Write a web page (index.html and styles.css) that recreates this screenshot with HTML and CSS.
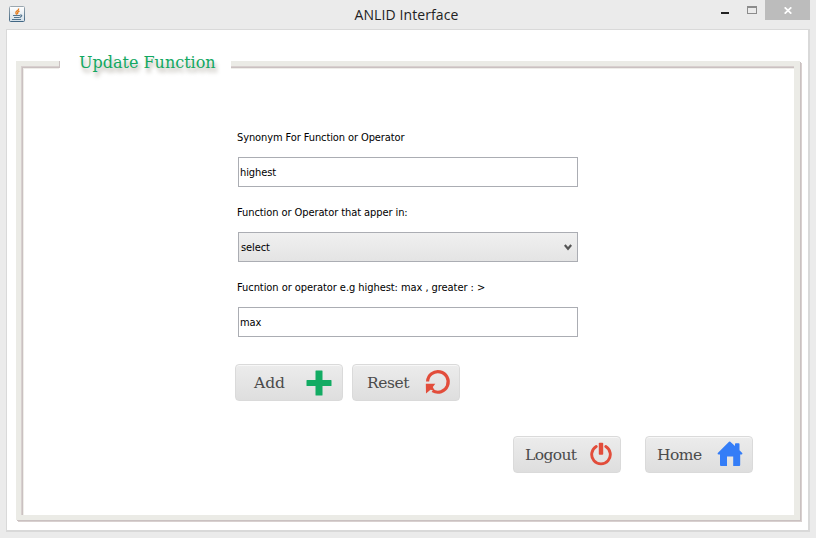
FILE: index.html
```html
<!DOCTYPE html>
<html lang="en">
<head>
<meta charset="utf-8">
<title>ANLID Interface</title>
<link rel="stylesheet" href="styles.css">
</head>
<body>
<div class="window">
  <header class="titlebar">
    <svg class="app-icon" width="16" height="16" viewBox="0 0 16 16"><defs><linearGradient id="java" x2="0" y2="1"><stop stop-color="#fff"/><stop offset="1" stop-color="#d3dfe8"/></linearGradient><linearGradient id="edge" x2="0" y2="1"><stop stop-color="#9aa7b0"/><stop offset="1" stop-color="#426784"/></linearGradient></defs><rect x=".5" y=".5" width="15" height="15" rx="1" fill="url(#java)" stroke="url(#edge)"/><path d="M9.500 2.500Q10 4 7.800 5Q6 6.500 7.800 8.500M10.500 5Q7.500 6.500 9 8" fill="none" stroke="#e57b1b" stroke-width="1.300"/><path d="M4 9.500h7M5 11.500h5.500M3 13.500h9M11 9q2.500-.3 1.500 1.200L10.800 11.500" fill="none" stroke="#52748e" stroke-width="1.100"/></svg>
    <h1 class="title">ANLID Interface</h1>
    <div class="controls">
      <span class="minimize"></span>
      <span class="maximize"></span>
      <span class="close"><svg width="8" height="7" viewBox="0 0 8 7"><path d="M.7.3 7.300 6.700M7.300.3.7 6.700" stroke="#fff" stroke-width="1.700"/></svg></span>
    </div>
  </header>
  <main class="client">
    <section class="frame">
      <h2 class="legend"><span class="legend-text">Update Function</span></h2>
      <form class="form">
        <label class="label l1" for="synonym">Synonym For Function or Operator</label>
        <input class="field" id="synonym" value="highest">
        <label class="label l2" for="clause">Function or Operator that apper in:</label>
        <div class="field select" id="clause"><span class="value">select</span><svg width="8" height="7" viewBox="0 0 8 7"><path d="M.8 1 4 4.800 7.200 1" fill="none" stroke="#555" stroke-width="2.200"/></svg></div>
        <label class="label l3" for="operator">Fucntion or operator e.g highest: max , greater : &gt;</label>
        <input class="field" id="operator" value="max">
      </form>
      <div class="actions">
        <button class="button add" type="button"><span class="t-add">Add</span><svg width="26" height="26" viewBox="0 0 26 26"><path d="M10 .5h6q.5 0 .5.500v9h8.500q.5 0 .5.500v5q0 .5-.5.500h-8.500v9q0 .5-.5.500h-6q-.5 0-.5-.5v-9H1q-.5 0-.5-.5v-5q0-.5.500-.5h8.500V1q0-.5.500-.5z" fill="#12ab63"/></svg></button>
        <button class="button reset" type="button"><span class="t-reset">Reset</span><svg width="26" height="26" viewBox="0 0 26 26"><path d="M2.600 12.500A10.300 10.300 0 1 1 7.500 21.700" fill="none" stroke="#e24d3b" stroke-width="3.200"/><path d="M.8 14.700h9.500L7.800 18l1.800 3.500-4.100-.8L1 24.500z" fill="#e24d3b"/></svg></button>
      </div>
      <nav class="navigation">
        <button class="button logout" type="button"><span class="t-logout">Logout</span><svg width="22" height="24" viewBox="0 0 22 24"><path d="M6.200 4.600A9.300 9.300 0 1 0 15.800 4.600" fill="none" stroke="#e24d3b" stroke-width="2.900" stroke-linecap="round"/><rect x="8.800" y=".7" width="4.400" height="12" rx=".8" fill="#e24d3b"/></svg></button>
        <button class="button home" type="button"><span class="t-home">Home</span><svg width="26" height="26" viewBox="0 0 26 26"><path d="M13 .5 18 5V3q0-.8.800-.8h2.900q.8 0 .8.800v6.200l2.700 2.800q.8 1.200-.6 1.500h-1.400V24q0 1-1 1h-6v-9.500H10V25H4q-1 0-1-1V13.500H1.500Q0 13.200.8 12L11.800.9Q12.500.2 13 .5z" fill="#347df7"/></svg></button>
      </nav>
    </section>
  </main>
</div>
</body>
</html>
```
FILE: styles.css
```css
* { box-sizing: border-box; }
body { margin: 0; background: #ebebeb; }
.window { width: 816px; height: 538px; padding: 0 6px; overflow: hidden; background: #ebebeb; }
.titlebar { height: 29px; display: grid; grid-template-columns: 150px 1fr 150px; padding-left: 3px; margin-right: -6px; }
.app-icon { margin-top: 6px; }
.title { margin: 0 0 0 -12px; text-align: center; font: 14px/29px "Open Sans", sans-serif; letter-spacing: .1px; color: #222; }
.controls { display: flex; justify-content: flex-end; padding-right: 6px; }
.minimize { width: 8px; height: 2px; background: #222; margin: 12px 18px 0 0; }
.maximize { width: 10px; height: 8px; border: 1px solid #8c8c8c; border-top-width: 2px; margin: 6px 8px 0 0; }
.close { width: 45px; height: 20px; background: #bcbcbc; display: flex; align-items: center; justify-content: center; }
.client { width: 804px; height: 503px; border: 1px solid #d9d9d9; border-right-width: 2px; border-bottom-width: 2px; background: #fff; padding: 31px 8px 0 9px; }
.frame { width: 784px; height: 459px; border: 5px solid #ebebe6; border-right-width: 6px; background: #fff; box-shadow: 1px 1px #cac1c1, 2px 2px #d8d0cf, inset 1px 1px #d8d0cf, inset 2px 2px #cac1c1, inset 3px 3px #efede9; }
.legend { width: 172px; height: 22px; margin: -13px 0 0 38px; padding-left: 20px; background: linear-gradient(#cac1c1, #cac1c1) 0 8px / 1px 7px no-repeat #fff; font: 16px/20px "DejaVu Serif", serif; color: #12a861; white-space: nowrap; text-shadow: 2px 4px 4px #aaa59a; }
.legend-text { letter-spacing: 0; }
.form { width: 341px; margin: 53px 0 0 216px; display: flex; flex-direction: column; }
.label { height: 29px; font: 11px/20px "DejaVu Sans Condensed", "DejaVu Sans", sans-serif; font-stretch: condensed; color: #000; white-space: nowrap; }
.l1 { letter-spacing: -.1px; }
.l2 { letter-spacing: -.08px; }
.l3 { letter-spacing: -.06px; }
.field { width: 340px; height: 30px; margin: 0 0 16px 1px; padding: 0 0 0 1px; border: 1px solid #abadb3; background: #fff; outline: 0; font: 11px "DejaVu Sans Condensed", "DejaVu Sans", sans-serif; font-stretch: condensed; letter-spacing: -.1px; color: #000; }
.select { display: flex; justify-content: space-between; align-items: center; padding: 0 5px 0 2px; background: linear-gradient(#f0f0f0, #e4e4e4); }
.actions { display: flex; gap: 9px; margin: 11px 0 0 214px; }
.navigation { display: flex; gap: 24px; margin: 35px 0 0 492px; }
.button { width: 108px; height: 37px; padding: 0; border: 1px solid #dadada; border-radius: 4px; background: linear-gradient(#ececec, #dedede); box-shadow: inset 0 1px #f7f7f7; display: flex; align-items: center; justify-content: space-between; font: 15.500px "DejaVu Serif", serif; color: #4b4b4b; }
.add { padding: 0 10px 0 18px; }
.reset { padding: 0 8px 0 14px; letter-spacing: -.4px; }
.logout { padding: 0 8px 0 11px; letter-spacing: -.6px; }
.home { padding: 0 9px 0 11px; letter-spacing: -.5px; }
.reset svg, .logout svg, .home svg { margin-top: -1px; }
```
